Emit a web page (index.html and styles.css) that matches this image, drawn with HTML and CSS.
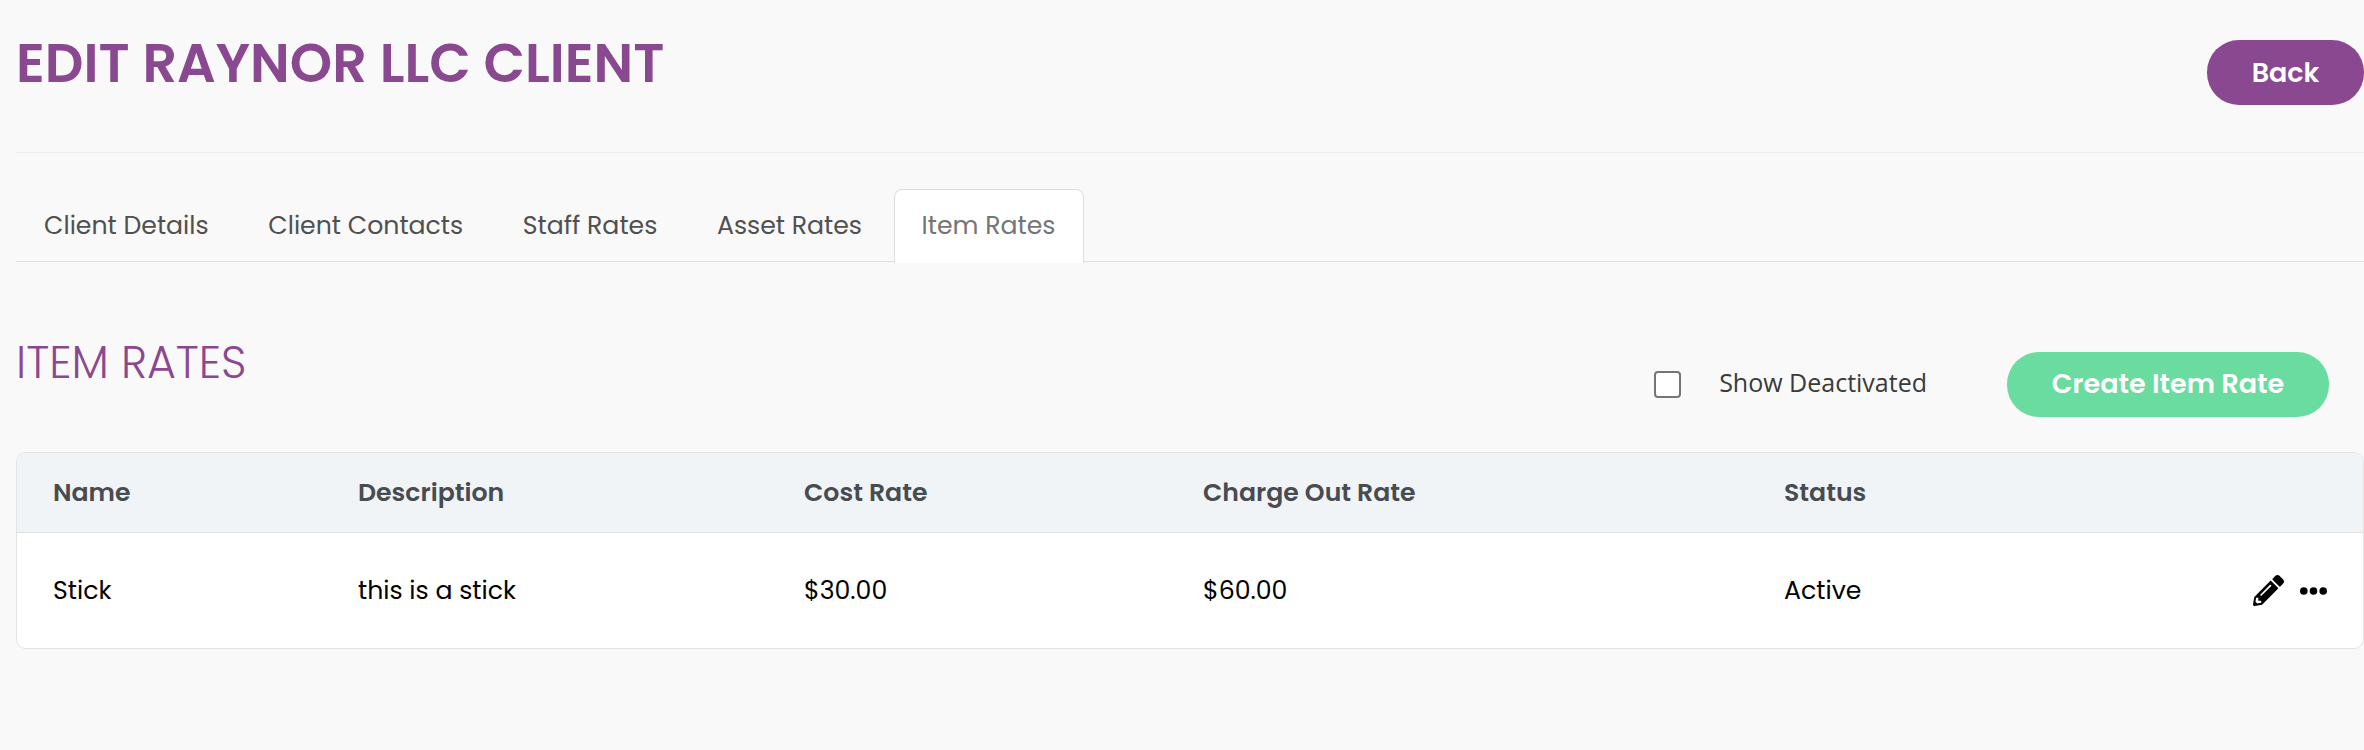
FILE: index.html
```html
<!DOCTYPE html>
<html lang="en">

<head>
  <meta charset="UTF-8" />
  <title>Edit Raynor LLC Client</title>
  <link rel="stylesheet" href="styles.css">
</head>

<body>
  <div class="page">
    <div class="page-header">
      <h1>Edit Raynor LLC Client</h1>
      <button class="btn-back">Back</button>
    </div>

    <ul class="tabs">
      <li>Client Details</li>
      <li>Client Contacts</li>
      <li>Staff Rates</li>
      <li>Asset Rates</li>
      <li class="active">Item Rates</li>
    </ul>

    <div class="section-header">
      <h2>Item Rates</h2>
      <div class="section-actions">
        <label class="check">
          <span class="check-box"></span>
          <span class="check-label">Show Deactivated</span>
        </label>
        <button class="btn-create">Create Item Rate</button>
      </div>
    </div>

    <div class="table">
      <div class="row head">
        <div>Name</div>
        <div>Description</div>
        <div>Cost Rate</div>
        <div>Charge Out Rate</div>
        <div>Status</div>
        <div></div>
      </div>
      <div class="row">
        <div>Stick</div>
        <div>this is a stick</div>
        <div>$30.00</div>
        <div>$60.00</div>
        <div>Active</div>
        <div class="row-icons">
          <svg class="icon-pencil" viewBox="0 0 512 512"><path d="M497.9 142.1l-46.1 46.1c-4.7 4.7-12.3 4.7-17 0l-111-111c-4.7-4.7-4.7-12.3 0-17l46.1-46.1c18.7-18.7 49.1-18.7 67.9 0l60.1 60.1c18.8 18.7 18.8 49.1 0 67.9zM284.2 99.8L21.6 362.4.4 483.9c-2.9 16.4 11.4 30.6 27.8 27.8l121.5-21.3 262.6-262.6c4.7-4.7 4.7-12.3 0-17l-111-111c-4.8-4.7-12.4-4.7-17.1 0zM124.1 339.9c-5.5-5.5-5.5-14.3 0-19.8l154-154c5.5-5.5 14.3-5.5 19.8 0s5.5 14.3 0 19.8l-154 154c-5.5 5.5-14.3 5.5-19.8 0zM88 424h48v36.3l-64.5 11.3-31.1-31.1L51.7 376H88v48z"/></svg>
          <svg class="icon-dots" viewBox="0 0 27 8"><circle cx="3.8" cy="4" r="3.8"/><circle cx="13.5" cy="4" r="3.8"/><circle cx="23.2" cy="4" r="3.8"/></svg>
        </div>
      </div>
    </div>
  </div>
</body>

</html>
```

FILE: styles.css
```css
* {
  box-sizing: border-box;
  margin: 0;
  padding: 0;
}
body {
  background: #f9f9f9;
  color: #000;
  font-family: "Poppins", "Inter", "Liberation Sans", sans-serif;
}
.page {
  padding-left: 16px;
}
.page-header {
  display: flex;
  justify-content: space-between;
  height: 153px;
  padding-top: 40px;
  border-bottom: 1px solid #eeeeee;
}
h1 {
  margin-top: -1px;
  color: #8a4890;
  font-size: 54px;
  font-weight: 600;
  line-height: 48px;
  text-transform: uppercase;
}
.btn-back {
  width: 157px;
  height: 65px;
  border: none;
  border-radius: 32px;
  background: #8a4890;
  color: #fff;
  font-family: inherit;
  font-size: 27px;
  font-weight: 600;
}
.tabs {
  display: flex;
  list-style: none;
  height: 73px;
  margin-top: 36px;
  border-bottom: 1px solid #dedede;
}
.tabs li {
  height: 74px;
  padding: 0 27px;
  margin-right: 3.6px;
  border: 1px solid transparent;
  border-bottom: none;
  border-radius: 8px 8px 0 0;
  color: #505050;
  font-size: 25.2px;
  line-height: 72px;
}
.tabs li.active {
  background: #fff;
  border-color: #dedede;
  color: #757575;
}
.section-header {
  display: flex;
  justify-content: space-between;
  height: 190px;
  padding-top: 77px;
}
h2 {
  color: #8a4890;
  font-size: 44.3px;
  font-weight: 300;
  line-height: 48px;
  text-transform: uppercase;
}
.section-actions {
  display: flex;
  align-items: flex-start;
  padding-top: 13px;
  padding-right: 35px;
}
.check {
  display: flex;
  align-items: center;
  height: 65px;
  margin-right: 80px;
}
.check-box {
  width: 27px;
  height: 27px;
  margin-right: 38px;
  border: 2px solid #757575;
  border-radius: 4px;
  background: #fff;
}
.check-label {
  padding-bottom: 5px;
  color: #3a3a3a;
  font-family: "Open Sans", sans-serif;
  font-size: 25px;
}
.btn-create {
  width: 322px;
  height: 65px;
  padding-bottom: 2px;
  border: none;
  border-radius: 32px;
  background: #6bdc9f;
  color: #fff;
  font-family: inherit;
  font-size: 27px;
  font-weight: 600;
}
.table {
  background: #fff;
  border: 1px solid #e3e3e3;
  border-radius: 10px;
  overflow: hidden;
}
.row {
  display: grid;
  grid-template-columns: 305px 446px 399px 581px 1fr 120px;
  align-items: center;
  height: 115px;
  padding-left: 36px;
  font-size: 25.2px;
}
.row.head {
  height: 80px;
  background: #f0f4f7;
  border-bottom: 1px solid #e3e3e3;
  color: #484c50;
  font-weight: 600;
}
.row-icons {
  display: flex;
  align-items: center;
  justify-content: flex-end;
  padding-right: 36px;
}
.icon-pencil {
  width: 31px;
  height: 31px;
  margin-right: 16px;
}
.icon-dots {
  width: 27px;
  height: 8px;
}
```
